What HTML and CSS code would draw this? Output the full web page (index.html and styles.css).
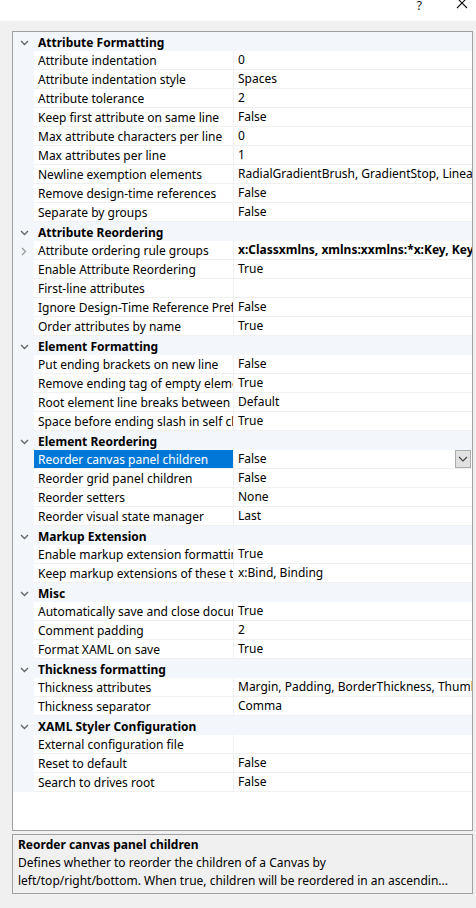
FILE: index.html
```html
<!DOCTYPE html>
<html>
<head>
<meta charset="utf-8">
<link rel="stylesheet" href="styles.css">
</head>
<body>
<div class="titlebar">
  <span class="help">?</span>
  <svg class="close" width="12" height="12" viewBox="0 0 12 12"><path d="M1 1 L11 11 M11 1 L1 11" stroke="#111" stroke-width="1.1" fill="none"/></svg>
</div>
<div class="main">
  <div class="grid">
    <div class="cat"><span class="gut"><svg class="chev" width="9" height="6" viewBox="0 0 9 6"><path d="M1 1 L4.5 4.5 L8 1" stroke="#666" stroke-width="1.4" fill="none"/></svg></span><span class="cat-name">Attribute Formatting</span></div>
    <div class="row"><span class="gut"></span><span class="name">Attribute indentation</span><span class="val">0</span></div>
    <div class="row"><span class="gut"></span><span class="name">Attribute indentation style</span><span class="val">Spaces</span></div>
    <div class="row"><span class="gut"></span><span class="name">Attribute tolerance</span><span class="val">2</span></div>
    <div class="row"><span class="gut"></span><span class="name">Keep first attribute on same line</span><span class="val">False</span></div>
    <div class="row"><span class="gut"></span><span class="name">Max attribute characters per line</span><span class="val">0</span></div>
    <div class="row"><span class="gut"></span><span class="name">Max attributes per line</span><span class="val">1</span></div>
    <div class="row"><span class="gut"></span><span class="name">Newline exemption elements</span><span class="val">RadialGradientBrush, GradientStop, LinearGradientBrush</span></div>
    <div class="row"><span class="gut"></span><span class="name">Remove design-time references</span><span class="val">False</span></div>
    <div class="row"><span class="gut"></span><span class="name">Separate by groups</span><span class="val">False</span></div>

    <div class="cat"><span class="gut"><svg class="chev" width="9" height="6" viewBox="0 0 9 6"><path d="M1 1 L4.5 4.5 L8 1" stroke="#666" stroke-width="1.4" fill="none"/></svg></span><span class="cat-name">Attribute Reordering</span></div>
    <div class="row"><span class="gut"><svg class="chev-r" width="6" height="9" viewBox="0 0 6 9"><path d="M1 1 L4.5 4.5 L1 8" stroke="#999" stroke-width="1.3" fill="none"/></svg></span><span class="name">Attribute ordering rule groups</span><span class="val bold">x:Classxmlns, xmlns:xxmlns:*x:Key, Key, x:Name</span></div>
    <div class="row"><span class="gut"></span><span class="name">Enable Attribute Reordering</span><span class="val">True</span></div>
    <div class="row"><span class="gut"></span><span class="name">First-line attributes</span><span class="val"></span></div>
    <div class="row"><span class="gut"></span><span class="name">Ignore Design-Time Reference Prefix</span><span class="val">False</span></div>
    <div class="row"><span class="gut"></span><span class="name">Order attributes by name</span><span class="val">True</span></div>

    <div class="cat"><span class="gut"><svg class="chev" width="9" height="6" viewBox="0 0 9 6"><path d="M1 1 L4.5 4.5 L8 1" stroke="#666" stroke-width="1.4" fill="none"/></svg></span><span class="cat-name">Element Formatting</span></div>
    <div class="row"><span class="gut"></span><span class="name">Put ending brackets on new line</span><span class="val">False</span></div>
    <div class="row"><span class="gut"></span><span class="name">Remove ending tag of empty element</span><span class="val">True</span></div>
    <div class="row"><span class="gut"></span><span class="name">Root element line breaks between attributes</span><span class="val">Default</span></div>
    <div class="row"><span class="gut"></span><span class="name">Space before ending slash in self closing</span><span class="val">True</span></div>

    <div class="cat"><span class="gut"><svg class="chev" width="9" height="6" viewBox="0 0 9 6"><path d="M1 1 L4.5 4.5 L8 1" stroke="#666" stroke-width="1.4" fill="none"/></svg></span><span class="cat-name">Element Reordering</span></div>
    <div class="row"><span class="gut"></span><span class="name selected">Reorder canvas panel children</span><span class="val"><span class="val-text">False</span><span class="dd"><svg width="10" height="6" viewBox="0 0 10 6"><path d="M1 1 L5 5 L9 1" stroke="#444" stroke-width="1.2" fill="none"/></svg></span></span></div>
    <div class="row"><span class="gut"></span><span class="name">Reorder grid panel children</span><span class="val">False</span></div>
    <div class="row"><span class="gut"></span><span class="name">Reorder setters</span><span class="val">None</span></div>
    <div class="row"><span class="gut"></span><span class="name">Reorder visual state manager</span><span class="val">Last</span></div>

    <div class="cat"><span class="gut"><svg class="chev" width="9" height="6" viewBox="0 0 9 6"><path d="M1 1 L4.5 4.5 L8 1" stroke="#666" stroke-width="1.4" fill="none"/></svg></span><span class="cat-name">Markup Extension</span></div>
    <div class="row"><span class="gut"></span><span class="name">Enable markup extension formatting</span><span class="val">True</span></div>
    <div class="row"><span class="gut"></span><span class="name">Keep markup extensions of these types on one line</span><span class="val">x:Bind, Binding</span></div>

    <div class="cat"><span class="gut"><svg class="chev" width="9" height="6" viewBox="0 0 9 6"><path d="M1 1 L4.5 4.5 L8 1" stroke="#666" stroke-width="1.4" fill="none"/></svg></span><span class="cat-name">Misc</span></div>
    <div class="row"><span class="gut"></span><span class="name">Automatically save and close document</span><span class="val">True</span></div>
    <div class="row"><span class="gut"></span><span class="name">Comment padding</span><span class="val">2</span></div>
    <div class="row"><span class="gut"></span><span class="name">Format XAML on save</span><span class="val">True</span></div>

    <div class="cat"><span class="gut"><svg class="chev" width="9" height="6" viewBox="0 0 9 6"><path d="M1 1 L4.5 4.5 L8 1" stroke="#666" stroke-width="1.4" fill="none"/></svg></span><span class="cat-name">Thickness formatting</span></div>
    <div class="row"><span class="gut"></span><span class="name">Thickness attributes</span><span class="val">Margin, Padding, BorderThickness, ThumbnailClipMargin</span></div>
    <div class="row"><span class="gut"></span><span class="name">Thickness separator</span><span class="val">Comma</span></div>

    <div class="cat"><span class="gut"><svg class="chev" width="9" height="6" viewBox="0 0 9 6"><path d="M1 1 L4.5 4.5 L8 1" stroke="#666" stroke-width="1.4" fill="none"/></svg></span><span class="cat-name">XAML Styler Configuration</span></div>
    <div class="row"><span class="gut"></span><span class="name">External configuration file</span><span class="val"></span></div>
    <div class="row"><span class="gut"></span><span class="name">Reset to default</span><span class="val">False</span></div>
    <div class="row"><span class="gut"></span><span class="name">Search to drives root</span><span class="val">False</span></div>
  </div>
  <div class="desc">
    <div class="desc-title">Reorder canvas panel children</div>
    <div class="desc-text">Defines whether to reorder the children of a Canvas by<br>left/top/right/bottom. When true, children will be reordered in an ascendin...</div>
  </div>
</div>
</body>
</html>
```

FILE: styles.css
```css
html, body {
  margin: 0;
  padding: 0;
  background: #f0f0f0;
  font-family: "Noto Sans", "Segoe UI", sans-serif;
  font-size: 12px;
  color: #000;
}

.titlebar {
  height: 21px;
  background: #fff;
  display: flex;
  justify-content: flex-end;
  align-items: flex-start;
  gap: 34px;
  padding-right: 8px;
}

.help {
  font-size: 12px;
  line-height: 12px;
  margin-top: 0;
  color: #111;
}

.close {
  margin-top: -3px;
}

.main {
  padding: 10px 3px 0 12px;
}

.grid {
  height: 798px;
  border: 1px solid #a0a0a0;
  background: #fff;
  overflow: hidden;
}

.cat, .row {
  display: flex;
  height: 19px;
  box-sizing: border-box;
}

.cat {
  background: #f3f6fb;
}

.gut {
  width: 21px;
  flex: none;
  background: #f3f6fb;
  display: flex;
  align-items: center;
  justify-content: center;
}

.chev {
  margin-left: 1px;
  margin-top: 2px;
}

.chev-r {
  margin-top: 1px;
}

.cat-name {
  font-weight: bold;
  line-height: 21px;
  padding-left: 4px;
  white-space: nowrap;
}

.name {
  width: 195px;
  flex: none;
  padding-left: 4px;
  border-right: 1px solid #f0f0f0;
  border-bottom: 1px solid #f0f0f0;
  line-height: 20px;
  white-space: nowrap;
  overflow: hidden;
}

.name.selected {
  background: #0078d7;
  color: #fff;
}

.val {
  flex: 1;
  min-width: 0;
  padding-left: 4px;
  border-bottom: 1px solid #f0f0f0;
  line-height: 20px;
  white-space: nowrap;
  overflow: hidden;
  display: flex;
  align-items: center;
}

.val.bold {
  font-weight: bold;
}

.val-text {
  flex: 1;
}

.dd {
  width: 14px;
  height: 16px;
  border: 1px solid #adadad;
  background: #e1e1e1;
  display: flex;
  align-items: center;
  justify-content: center;
  margin-right: 1px;
}

.desc {
  margin-top: 3px;
  height: 57px;
  border: 1px solid #a0a0a0;
  background: #f0f0f0;
  padding: 1px 5px 0;
  line-height: 18px;
  overflow: hidden;
  white-space: nowrap;
}

.desc-title {
  font-weight: bold;
}
```
